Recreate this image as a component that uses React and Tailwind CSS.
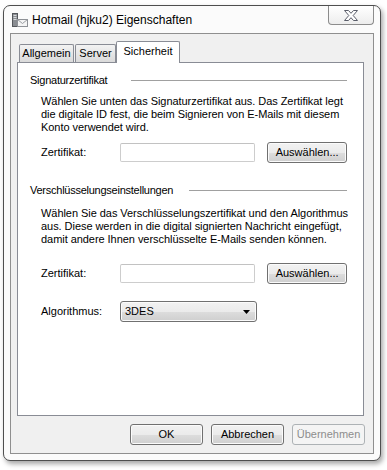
import React from 'react';

const Button = ({ children, disabled, className = '' }) => (
    <div
        className={`flex items-center justify-center h-[21px] rounded-[3px] border text-[11px] ${
            disabled
                ? 'border-[#adb2b5] bg-[#f4f4f4] text-[#8d8d8d]'
                : 'border-[#707070] bg-[linear-gradient(#f2f2f2_0%,#ebebeb_50%,#dddddd_51%,#cfcfcf_100%)] shadow-[inset_0_0_0_1px_#fbfbfb] text-black'
        } ${className}`}
    >
        {children}
    </div>
);

const TextBox = () => (
    <div className="w-[136px] h-[19px] rounded-[2px] border border-[#cdcdcd] border-t-[#c2c2c2] bg-white" />
);

const Tab = ({ label, active, className = '' }) => (
    <div
        className={`flex items-center justify-center border border-b-0 border-[#898c95] rounded-t-[2px] ${
            active
                ? 'h-[22px] -mb-px bg-white pb-[2px]'
                : 'h-[18px] bg-[linear-gradient(#f3f3f3,#e6e6e6_50%,#dadada)]'
        } ${className}`}
    >
        {label}
    </div>
);

const GroupHeader = ({ label, labelWidth }) => (
    <div className="flex items-center h-[13px]">
        <span className={`shrink-0 tracking-[-0.25px] ${labelWidth}`}>{label}</span>
        <div className="flex-1 h-px bg-[#a0a0a0]" />
    </div>
);

const TitleIcon = () => (
    <svg width="16" height="16" viewBox="0 0 16 16">
        {/* server tower */}
        <rect x="0.5" y="1.5" width="5" height="13" fill="#8a8d92" stroke="#55585c" />
        <rect x="1.5" y="3" width="3" height="1" fill="#d8dadc" />
        <rect x="1.5" y="5" width="3" height="1" fill="#d8dadc" />
        <rect x="1.5" y="7" width="3" height="1" fill="#d8dadc" />
        {/* envelope */}
        <rect x="5.5" y="7.5" width="10" height="7" fill="#f4f4f4" stroke="#8e9196" />
        <path d="M5.5 7.5 L10.5 11.5 L15.5 7.5" fill="none" stroke="#9a9da2" />
    </svg>
);

const CloseGlyph = () => (
    <svg width="14" height="11" viewBox="0 0 14 11">
        <polygon
            points="0.5,0.5 4.5,0.5 7,3.3 9.5,0.5 13.5,0.5 9.2,5.5 13.5,10.5 9.5,10.5 7,7.7 4.5,10.5 0.5,10.5 4.8,5.5"
            fill="#ffffff"
            stroke="#5b5e6a"
            strokeWidth="1"
            strokeLinejoin="round"
        />
    </svg>
);

export default function App() {
    return (
        <div className="w-[387px] h-[470px] bg-white overflow-hidden pt-[5px] pl-[3px] font-['Liberation_Sans',Arial,sans-serif] text-[11px] leading-[13px] text-black">
            <div className="w-[378px] h-[456px] flex flex-col rounded-[7px] border border-[#4f4f4f] bg-[#fbfbfb] shadow-[2px_3px_5px_rgba(0,0,0,0.35)]">
                {/* Title bar */}
                <div className="h-[27px] flex pl-[8px] pr-[6px]">
                    <div className="flex items-center pt-[1px]">
                        <TitleIcon />
                        <span className="ml-[4px] text-[12px] leading-[14px]">Hotmail (hjku2) Eigenschaften</span>
                    </div>
                    <div className="flex-1" />
                    <div className="w-[46px] h-[19px] flex items-center justify-center border border-t-0 border-[#8c8c8c] rounded-b-[4px] bg-[linear-gradient(#ffffff,#ededed)]">
                        <CloseGlyph />
                    </div>
                </div>

                {/* Client area */}
                <div className="mx-[6px] h-[421px] flex flex-col border border-[#8f8f8f] bg-[#f0f0f0] pt-[7px] pl-[6px] pr-[9px]">
                    <div className="relative z-10 flex items-end h-[21px] pl-[2px]">
                        <Tab label="Allgemein" className="w-[55px]" />
                        <Tab label="Server" className="ml-[1px] w-[41px]" />
                        <Tab label="Sicherheit" active className="w-[64px]" />
                    </div>

                    <div className="h-[354px] border border-[#898c95] bg-white pt-[11px] pl-[12px] pr-[16px]">
                        <GroupHeader label="Signaturzertifikat" labelWidth="w-[101px]" />
                        <p className="ml-[11px] mt-[8px] whitespace-nowrap tracking-[-0.05px]">
                            Wählen Sie unten das Signaturzertifikat aus. Das Zertifikat legt<br />
                            die digitale ID fest, die beim Signieren von E-Mails mit diesem<br />
                            Konto verwendet wird.
                        </p>
                        <div className="ml-[11px] mt-[8px] flex items-center h-[21px]">
                            <span className="w-[79px]">Zertifikat:</span>
                            <TextBox />
                            <Button className="ml-[12px] w-[80px]">Auswählen...</Button>
                        </div>

                        <div className="mt-[21px]">
                            <GroupHeader label="Verschlüsselungseinstellungen" labelWidth="w-[159px]" />
                        </div>
                        <p className="ml-[11px] mt-[10px] whitespace-nowrap tracking-[-0.05px]">
                            Wählen Sie das Verschlüsselungszertifikat und den Algorithmus<br />
                            aus. Diese werden in die digital signierten Nachricht eingefügt,<br />
                            damit andere Ihnen verschlüsselte E-Mails senden können.
                        </p>
                        <div className="ml-[11px] mt-[17px] flex items-center h-[21px]">
                            <span className="w-[79px]">Zertifikat:</span>
                            <TextBox />
                            <Button className="ml-[12px] w-[80px]">Auswählen...</Button>
                        </div>
                        <div className="ml-[11px] mt-[17px] flex items-center h-[21px]">
                            <span className="w-[79px]">Algorithmus:</span>
                            <div className="w-[137px] h-[21px] flex items-center pl-[4px] pr-[6px] rounded-[3px] border border-[#707070] bg-[linear-gradient(#f2f2f2_0%,#ebebeb_50%,#dddddd_51%,#cfcfcf_100%)] shadow-[inset_0_0_0_1px_#fbfbfb]">
                                <span className="flex-1">3DES</span>
                                <svg width="7" height="4" viewBox="0 0 7 4">
                                    <polygon points="0,0 7,0 3.5,4" fill="#000" />
                                </svg>
                            </div>
                        </div>
                    </div>

                    <div className="mt-[8px] -mr-[1px] flex justify-end gap-[8px]">
                        <Button className="w-[73px]">OK</Button>
                        <Button className="w-[73px]">Abbrechen</Button>
                        <Button disabled className="w-[73px]">Übernehmen</Button>
                    </div>
                </div>
            </div>
        </div>
    );
}
